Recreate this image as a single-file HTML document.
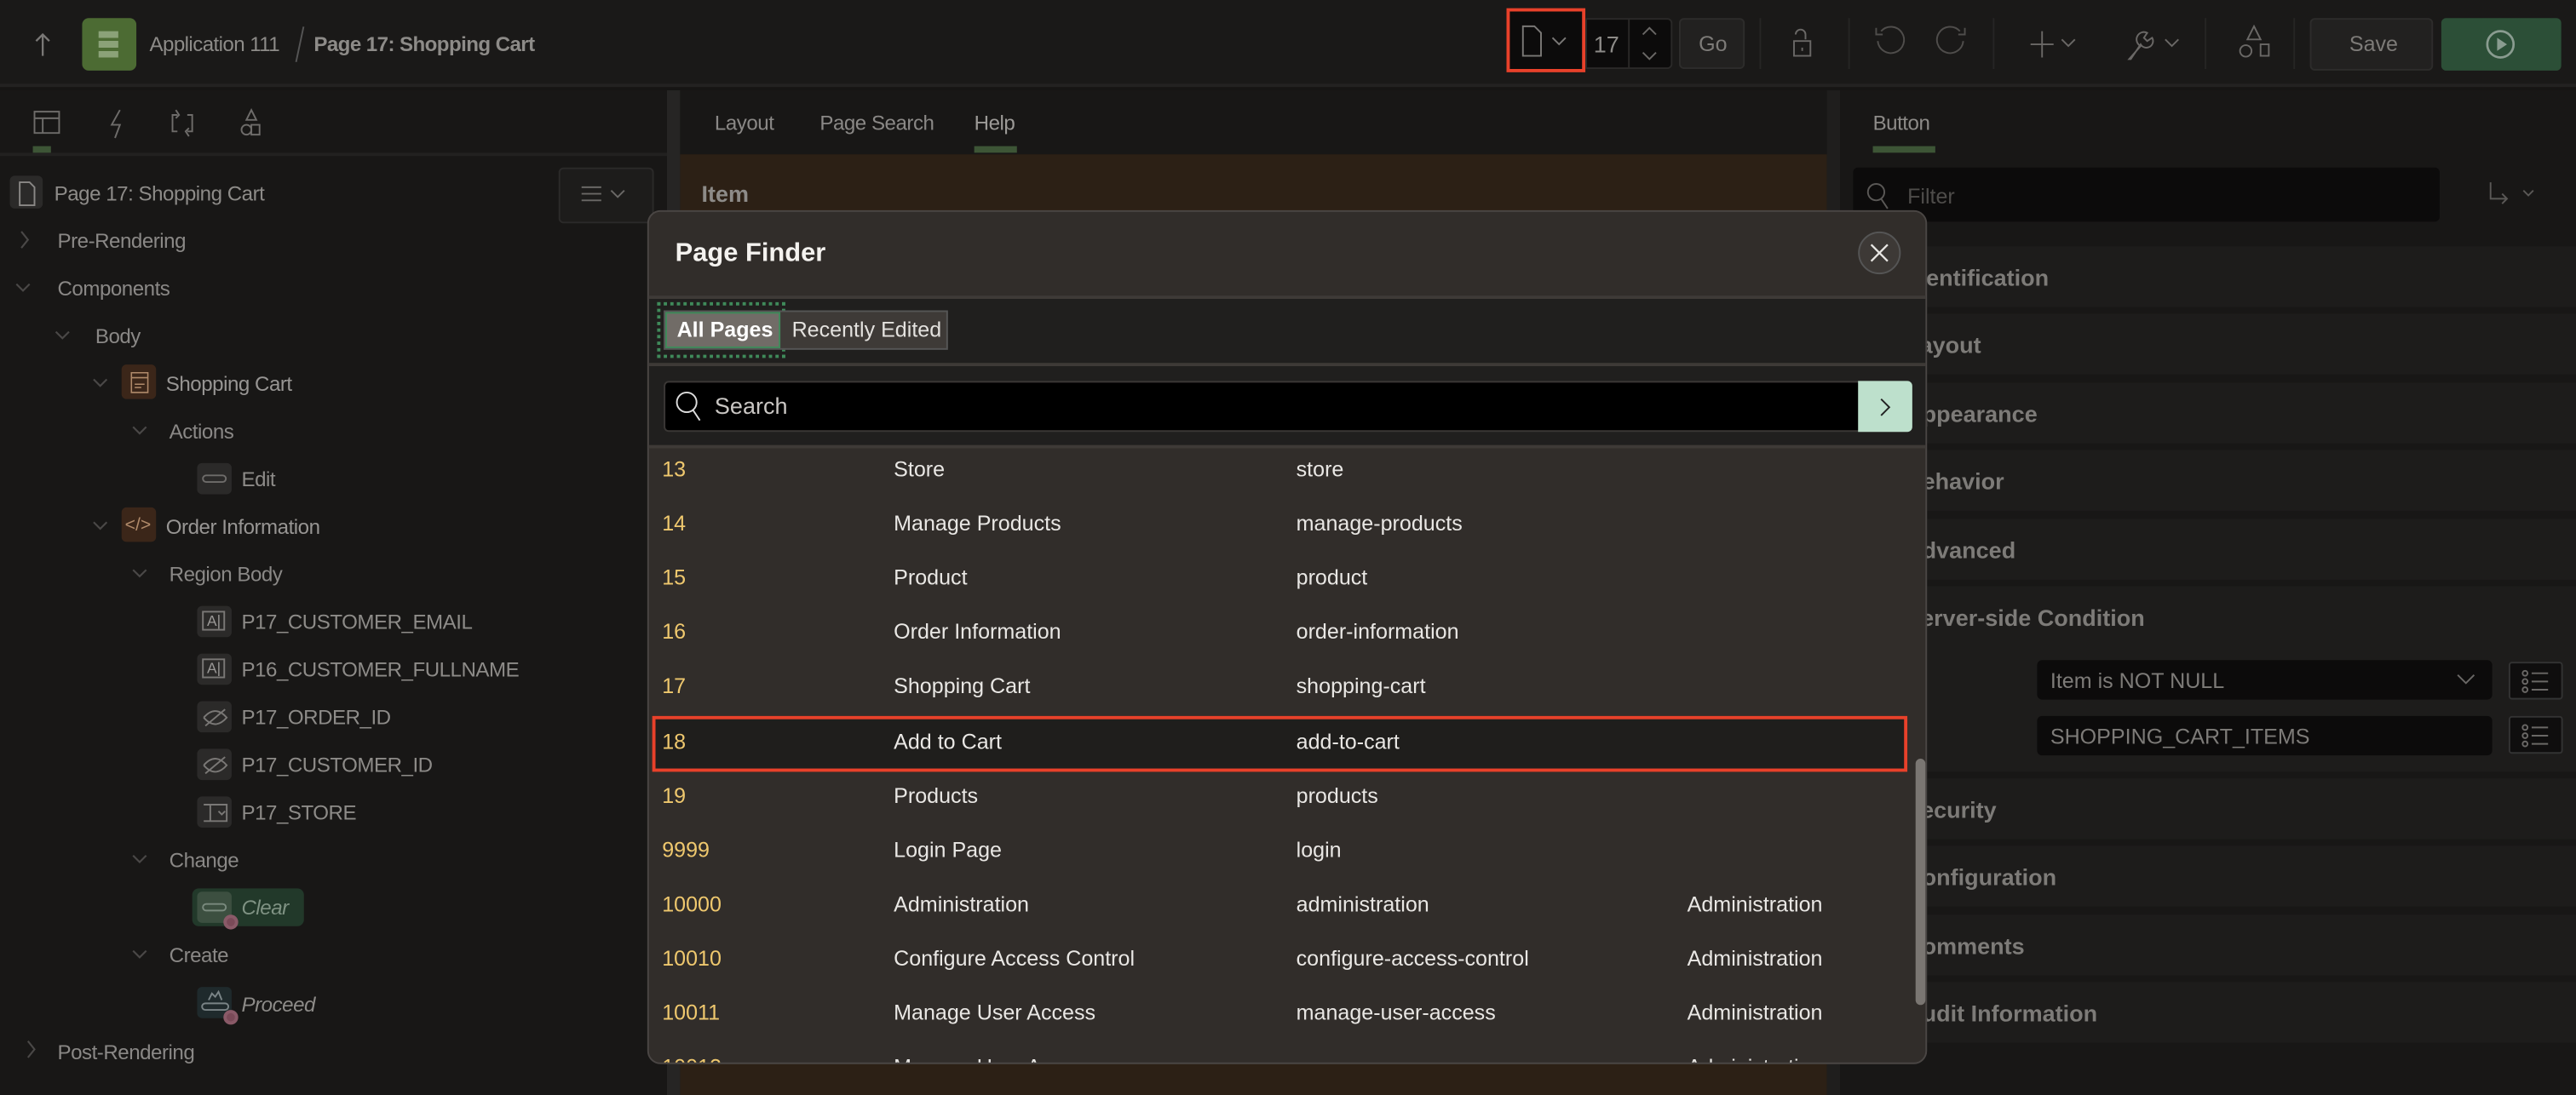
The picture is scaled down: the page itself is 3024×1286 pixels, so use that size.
<!DOCTYPE html>
<html><head><meta charset="utf-8">
<style>
*{box-sizing:border-box;margin:0;padding:0}
html,body{width:3024px;height:1286px;overflow:hidden;background:#161514}
#s{position:absolute;left:0;top:0;width:1568px;height:667px;transform:scale(1.928571);transform-origin:0 0;font-family:"Liberation Sans",sans-serif;color:#8a8886;font-size:13px;background:#161514}
.a{position:absolute}
.t{position:absolute;white-space:nowrap;line-height:16px}
.tr{font-size:12.5px;letter-spacing:-0.25px}
svg{position:absolute;overflow:visible}
.ic{position:absolute;width:21px;height:19px;background:#2b2a29;border-radius:3px}
.sec{position:absolute;left:1120px;width:448px;height:37px;background:#1d1c1b}
.sec span{position:absolute;left:40px;top:11px;font-weight:bold;font-size:14px;color:#7d7b78}
.row{position:absolute;left:396px;width:768px;height:33px;color:#e9e7e4;font-size:13px}
.row span{position:absolute;top:8px;white-space:nowrap}
.row .n{left:7px;color:#efc86e}
.row .c2{left:148px}.row .c3{left:393px}.row .c4{left:631px}
</style></head><body><div id="s">
<div class="a" style="left:0;top:0;width:1568px;height:53px;background:#1a1918;border-bottom:2px solid #232221"></div>
<svg style="left:20px;top:19px" width="12" height="16"><path d="M6 15V2M2 6l4-4 4 4" stroke="#7a7876" stroke-width="1.2" fill="none"/></svg>
<div class="a" style="left:50px;top:11px;width:33px;height:32px;background:#4c6b33;border-radius:4px"></div>
<div class="a" style="left:60px;top:19px;width:12px;height:17px;background:repeating-linear-gradient(#9bb089 0 4px,#4c6b33 4px 6px);opacity:.8"></div>
<div class="t" style="left:91px;top:19px;font-size:12.5px;letter-spacing:-0.3px;color:#8d8b88">Application 111</div>
<div class="a" style="left:182px;top:16px;width:1px;height:22px;background:#555;transform:rotate(12deg)"></div>
<div class="t" style="left:191px;top:19px;font-size:12.5px;letter-spacing:-0.3px;font-weight:bold;color:#8d8b88">Page 17: Shopping Cart</div>
<div class="a" style="left:919px;top:7px;width:44px;height:36px;background:#0c0b0b"></div>
<svg style="left:926px;top:15px" width="30" height="20"><path d="M1 1h7l4 4v14H1z" stroke="#7a7876" fill="none"/><path d="M19 8l4 4 4-4" stroke="#7a7876" fill="none"/></svg>
<div class="a" style="left:917px;top:5px;width:48px;height:39px;border:2px solid #e8412a"></div>
<div class="a" style="left:965px;top:11px;width:53px;height:31px;background:#0c0b0b;border:1px solid #2a2928;border-radius:0 3px 3px 0"></div>
<div class="a" style="left:991px;top:11px;width:1px;height:31px;background:#2a2928"></div>
<div class="t" style="left:970px;top:19px;font-size:14px;color:#8d8b88">17</div>
<svg style="left:999px;top:16px" width="10" height="22"><path d="M1 5l4-4 4 4M1 16l4 4 4-4" stroke="#6a6866" fill="none"/></svg>
<div class="a" style="left:1022px;top:11px;width:40px;height:31px;background:#222120;border:1px solid #2d2c2b;border-radius:3px"></div>
<div class="t" style="left:1034px;top:19px;color:#7d7b78">Go</div>
<div class="a" style="left:1071px;top:11px;width:1px;height:31px;background:#262524"></div>
<svg style="left:1090px;top:16px" width="16" height="22"><path d="M3 5a3 3 0 0 1 6 0v3M2 9h10v9H2z" stroke="#6a6866" fill="none"/><path d="M7 13v2" stroke="#6a6866"/></svg>
<div class="a" style="left:1125px;top:11px;width:1px;height:31px;background:#262524"></div>
<svg style="left:1140px;top:16px" width="70" height="22"><path d="M5 3a8 8 0 1 1 -2 6M2 1v4h4" stroke="#4f4d4b" fill="none"/><path d="M53 3a8 8 0 1 0 2 6M56 1v4h-4" stroke="#4f4d4b" fill="none"/></svg>
<div class="a" style="left:1213px;top:11px;width:1px;height:31px;background:#262524"></div>
<svg style="left:1236px;top:18px" width="30" height="18"><path d="M7 1v16M0 9h14M19 6l4 4 4-4" stroke="#6a6866" fill="none"/></svg>
<svg style="left:1291px;top:16px" width="36" height="22"><path d="M5 20l7-8a4 4 0 0 1 4-8l-2 3 2 2 3-2a4 4 0 0 1-7 4l-6 9z" stroke="#6a6866" fill="none"/><path d="M27 8l4 4 4-4" stroke="#6a6866" fill="none"/></svg>
<div class="a" style="left:1342px;top:11px;width:1px;height:31px;background:#262524"></div>
<svg style="left:1362px;top:15px" width="20" height="22"><path d="M10 1l4 8H6z M14 12h5v7h-5z" stroke="#6a6866" fill="none"/><circle cx="5" cy="16" r="3.5" stroke="#6a6866" fill="none"/></svg>
<div class="a" style="left:1396px;top:11px;width:1px;height:31px;background:#262524"></div>
<div class="a" style="left:1406px;top:11px;width:75px;height:32px;background:#222120;border:1px solid #2d2c2b;border-radius:3px"></div>
<div class="t" style="left:1430px;top:19px;color:#7d7b78">Save</div>
<div class="a" style="left:1486px;top:11px;width:73px;height:32px;background:#2c4f37;border-radius:3px"></div>
<svg style="left:1512px;top:17px" width="22" height="22"><circle cx="10" cy="10" r="8" stroke="#8a9c90" stroke-width="1.4" fill="none"/><path d="M8 6l6 4-6 4z" fill="#8a9c90"/></svg>
<div class="a" style="left:0;top:55px;width:406px;height:612px;background:#181716"></div>
<div class="a" style="left:0;top:93px;width:406px;height:2px;background:#222120"></div>
<svg style="left:20px;top:66px" width="150" height="20"><path d="M1 2h15v13H1zM1 6h15M6 6v9" stroke="#6e6c6a" fill="none"/><path d="M53 1l-5 9h5l-3 8" stroke="#6e6c6a" fill="none"/><path d="M88 4h-3v10h3M94 4h3v10h-3M87 1l2 3-2 2M95 17l-2-3 2-2" stroke="#6e6c6a" fill="none"/><path d="M133 1l3 6h-6z M133 10h5v6h-5z" stroke="#6e6c6a" fill="none"/><circle cx="130" cy="13" r="3" stroke="#6e6c6a" fill="none"/></svg>
<div class="a" style="left:20px;top:89px;width:11px;height:4px;background:#3d5536"></div>
<div class="a" style="left:6px;top:107px;width:20px;height:20px;background:#2b2a29;border-radius:3px"></div>
<svg style="left:11px;top:110px" width="12" height="16"><path d="M1 1h6l3 3v11H1z" stroke="#8a8886" fill="none"/></svg>
<div class="t tr" style="left:33px;top:110px;color:#8d8b88">Page 17: Shopping Cart</div>
<div class="a" style="left:340px;top:102px;width:58px;height:34px;background:#1d1c1b;border:1px solid #2b2a29;border-radius:3px"></div>
<svg style="left:354px;top:113px" width="30" height="12"><path d="M0 1h12M0 5h12M0 9h12M18 3l4 4 4-4" stroke="#6a6866" fill="none"/></svg>
<svg style="left:0;top:0" width="400" height="667"><g stroke="#4a4847" fill="none" stroke-width="1.1">
<path d="M13 141l4 5-4 5"/>
<path d="M10 173l4 4 4-4"/><path d="M34 202l4 4 4-4"/><path d="M57 231l4 4 4-4"/><path d="M81 260l4 4 4-4"/><path d="M57 318l4 4 4-4"/><path d="M81 347l4 4 4-4"/><path d="M81 521l4 4 4-4"/><path d="M81 579l4 4 4-4"/>
<path d="M17 634l4 5-4 5"/></g></svg>
<div class="t tr" style="left:35px;top:139px">Pre-Rendering</div>
<div class="t tr" style="left:35px;top:168px">Components</div>
<div class="t tr" style="left:58px;top:197px">Body</div>
<div class="a" style="left:74px;top:222px;width:21px;height:21px;background:#3b2619;border-radius:3px"></div>
<svg style="left:79px;top:226px" width="12" height="14"><path d="M1 1h10v12H1zM1 4h10M3 8h6M3 10h4" stroke="#b08a6a" fill="none" stroke-width=".8"/></svg>
<div class="t tr" style="left:101px;top:226px;color:#979593">Shopping Cart</div>
<div class="t tr" style="left:103px;top:255px">Actions</div>
<div class="ic" style="left:120px;top:282px"></div><div class="a" style="left:123px;top:289px;width:15px;height:5px;border:1px solid #6e6c6a;border-radius:3px"></div>
<div class="t tr" style="left:147px;top:284px;color:#8d8b88">Edit</div>
<div class="a" style="left:74px;top:309px;width:21px;height:21px;background:#3b2619;border-radius:3px"></div>
<div class="t" style="left:76px;top:312px;font-size:11px;color:#b08a6a">&lt;/&gt;</div>
<div class="t tr" style="left:101px;top:313px;color:#979593">Order Information</div>
<div class="t tr" style="left:103px;top:342px">Region Body</div>
<div class="ic" style="left:120px;top:369px"></div><div class="t" style="left:123px;top:372px;font-size:9px;border:1px solid #7a7876;line-height:10px;padding:0 2px;color:#9a9896">A|</div>
<div class="t tr" style="left:147px;top:371px;color:#8d8b88">P17_CUSTOMER_EMAIL</div>
<div class="ic" style="left:120px;top:398px"></div><div class="t" style="left:123px;top:401px;font-size:9px;border:1px solid #7a7876;line-height:10px;padding:0 2px;color:#9a9896">A|</div>
<div class="t tr" style="left:147px;top:400px;color:#8d8b88">P16_CUSTOMER_FULLNAME</div>
<div class="ic" style="left:120px;top:427px"></div><svg style="left:123px;top:431px" width="16" height="12"><path d="M1 6q7-8 14 0q-7 8-14 0M2 11L14 1" stroke="#7a7876" fill="none"/></svg>
<div class="t tr" style="left:147px;top:429px;color:#8d8b88">P17_ORDER_ID</div>
<div class="ic" style="left:120px;top:456px"></div><svg style="left:123px;top:460px" width="16" height="12"><path d="M1 6q7-8 14 0q-7 8-14 0M2 11L14 1" stroke="#7a7876" fill="none"/></svg>
<div class="t tr" style="left:147px;top:458px;color:#8d8b88">P17_CUSTOMER_ID</div>
<div class="ic" style="left:120px;top:485px"></div><svg style="left:123px;top:489px" width="16" height="12"><path d="M1 1h14v10H1M5 1v10M10 5l2 2 2-2" stroke="#7a7876" fill="none"/></svg>
<div class="t tr" style="left:147px;top:487px;color:#8d8b88">P17_STORE</div>
<div class="t tr" style="left:103px;top:516px">Change</div>
<div class="a" style="left:117px;top:541px;width:68px;height:23px;background:#22392a;border-radius:4px"></div>
<div class="a" style="left:120px;top:543px;width:21px;height:19px;background:#3c4f40;border-radius:3px"></div><div class="a" style="left:123px;top:550px;width:15px;height:5px;border:1px solid #7a8a7e;border-radius:3px"></div>
<div class="a" style="left:136px;top:557px;width:9px;height:9px;border-radius:50%;background:#7a4a58;border:2px solid #8a5a68"></div>
<div class="t tr" style="left:147px;top:545px;font-style:italic;color:#7f9283">Clear</div>
<div class="t tr" style="left:103px;top:574px">Create</div>
<div class="ic" style="left:120px;top:601px;background:#1f2a2c"></div><svg style="left:123px;top:603px" width="16" height="14"><path d="M2 12h12a2 2 0 0 0 0-4H2a2 2 0 0 0 0 4M4 6l2-4 2 2 2-3 2 5" stroke="#7a8486" fill="none"/></svg>
<div class="a" style="left:136px;top:615px;width:9px;height:9px;border-radius:50%;background:#7a4a58;border:2px solid #8a5a68"></div>
<div class="t tr" style="left:147px;top:604px;font-style:italic;color:#8d8b88">Proceed</div>
<div class="t tr" style="left:35px;top:633px">Post-Rendering</div>
<div class="a" style="left:406px;top:55px;width:8px;height:612px;background:#262524"></div>
<div class="a" style="left:414px;top:55px;width:698px;height:39px;background:#181716"></div>
<div class="t tr" style="left:435px;top:67px">Layout</div>
<div class="t tr" style="left:499px;top:67px">Page Search</div>
<div class="t tr" style="left:593px;top:67px;color:#9c9a97">Help</div>
<div class="a" style="left:593px;top:89px;width:26px;height:4px;background:#3d5536"></div>
<div class="a" style="left:414px;top:94px;width:698px;height:573px;background:#2c2015"></div>
<div class="t" style="left:427px;top:110px;font-weight:bold;font-size:14px;color:#8d8b88">Item</div>
<div class="a" style="left:1112px;top:55px;width:8px;height:612px;background:#1f1e1d"></div>
<div class="a" style="left:1120px;top:55px;width:448px;height:612px;background:#181716"></div>
<div class="t tr" style="left:1140px;top:67px;color:#8d8b88">Button</div>
<div class="a" style="left:1140px;top:89px;width:38px;height:4px;background:#3d5536"></div>
<div class="a" style="left:1128px;top:102px;width:357px;height:33px;background:#0c0b0b;border-radius:3px"></div>
<svg style="left:1136px;top:111px" width="16" height="18"><circle cx="6" cy="6" r="5" stroke="#5a5856" fill="none"/><path d="M9 10l4 6" stroke="#5a5856"/></svg>
<div class="t" style="left:1161px;top:112px;color:#4e4c4a">Filter</div>
<svg style="left:1514px;top:110px" width="32" height="18"><path d="M2 1v10h10M9 8l3 3-3 3M22 6l3 3 3-3" stroke="#5a5856" fill="none"/></svg>
<div class="sec" style="top:150px"><span>Identification</span></div>
<div class="sec" style="top:191px"><span>Layout</span></div>
<div class="sec" style="top:233px"><span>Appearance</span></div>
<div class="sec" style="top:274px"><span>Behavior</span></div>
<div class="sec" style="top:316px"><span>Advanced</span></div>
<div class="sec" style="top:357px;height:113px"><span>Server-side Condition</span></div>
<div class="a" style="left:1240px;top:402px;width:277px;height:24px;background:#0c0b0b;border-radius:3px"></div>
<div class="t" style="left:1248px;top:407px;color:#7d7b78">Item is NOT NULL</div>
<svg style="left:1495px;top:410px" width="12" height="8"><path d="M1 1l5 5 5-5" stroke="#6a6866" fill="none"/></svg>
<div class="a" style="left:1240px;top:436px;width:277px;height:24px;background:#0c0b0b;border-radius:3px"></div>
<div class="t" style="left:1248px;top:441px;color:#7d7b78">SHOPPING_CART_ITEMS</div>
<div class="a" style="left:1527px;top:403px;width:33px;height:23px;border:1px solid #333;background:#0f0e0e;border-radius:2px"></div>
<div class="a" style="left:1527px;top:436px;width:33px;height:23px;border:1px solid #333;background:#0f0e0e;border-radius:2px"></div>
<svg style="left:1535px;top:407px" width="18" height="50"><g stroke="#6a6866" fill="none"><circle cx="2" cy="3" r="1.5"/><circle cx="2" cy="8" r="1.5"/><circle cx="2" cy="13" r="1.5"/><path d="M6 3h10M6 8h10M6 13h10"/><circle cx="2" cy="36" r="1.5"/><circle cx="2" cy="41" r="1.5"/><circle cx="2" cy="46" r="1.5"/><path d="M6 36h10M6 41h10M6 46h10"/></g></svg>
<div class="sec" style="top:474px"><span>Security</span></div>
<div class="sec" style="top:515px"><span>Configuration</span></div>
<div class="sec" style="top:557px"><span>Comments</span></div>
<div class="sec" style="top:598px"><span>Audit Information</span></div>
<div class="a" style="left:394px;top:128px;width:779px;height:520px;background:#312d2a;border:1px solid #4a4644;border-radius:8px;overflow:hidden">
  <div class="a" style="left:0;top:51px;width:779px;height:43px;background:#201f1e;border-top:2px solid #3e3a37;border-bottom:2px solid #3e3a37"></div>
  <div class="a" style="left:0;top:94px;width:779px;height:50px;background:#201f1e;border-bottom:2px solid #3e3a37"></div>
</div>
<div class="t" style="left:411px;top:145px;font-size:16px;font-weight:bold;color:#f4f2ef;line-height:19px">Page Finder</div>
<div class="a" style="left:1131px;top:141px;width:26px;height:26px;border-radius:50%;background:#3d3936;border:1px solid #555"></div>
<svg style="left:1138px;top:148px" width="12" height="12"><path d="M1 1l10 10M11 1L1 11" stroke="#e8e6e3" stroke-width="1.2"/></svg>
<div class="a" style="left:400px;top:184px;width:78px;height:34px;border:2px dotted #3f8a5a"></div>
<div class="a" style="left:404px;top:189px;width:173px;height:24px;background:#3e3a37;border:1px solid #555"></div>
<div class="a" style="left:405px;top:190px;width:70px;height:22px;background:#716c67;border:1px solid #3f8a5a"></div>
<div class="t" style="left:412px;top:193px;font-weight:bold;color:#fff">All Pages</div>
<div class="t" style="left:482px;top:193px;color:#e4e2df">Recently Edited</div>
<div class="a" style="left:404px;top:232px;width:760px;height:31px;background:#000;border:1px solid #3a3735;border-radius:3px"></div>
<div class="a" style="left:1131px;top:232px;width:33px;height:31px;background:#bde0cc;border-radius:0 3px 3px 0"></div>
<svg style="left:1144px;top:242px" width="8" height="12"><path d="M1 1l5 5-5 5" stroke="#222" fill="none"/></svg>
<svg style="left:411px;top:238px" width="18" height="20"><circle cx="7" cy="7" r="6" stroke="#ddd" fill="none"/><path d="M11 12l4 6" stroke="#ddd"/></svg>
<div class="t" style="left:435px;top:239px;font-size:14px;color:#c9c6c3">Search</div>
<div class="row" style="top:270px"><span class="n">13</span><span class="c2">Store</span><span class="c3">store</span></div>
<div class="row" style="top:303px"><span class="n">14</span><span class="c2">Manage Products</span><span class="c3">manage-products</span></div>
<div class="row" style="top:336px"><span class="n">15</span><span class="c2">Product</span><span class="c3">product</span></div>
<div class="row" style="top:369px"><span class="n">16</span><span class="c2">Order Information</span><span class="c3">order-information</span></div>
<div class="row" style="top:402px"><span class="n">17</span><span class="c2">Shopping Cart</span><span class="c3">shopping-cart</span></div>
<div class="a" style="left:397px;top:436px;width:764px;height:34px;background:#1f1e1c;border:2px solid #e8412a"></div>
<div class="row" style="top:436px"><span class="n">18</span><span class="c2">Add to Cart</span><span class="c3">add-to-cart</span></div>
<div class="row" style="top:469px"><span class="n">19</span><span class="c2">Products</span><span class="c3">products</span></div>
<div class="row" style="top:502px"><span class="n">9999</span><span class="c2">Login Page</span><span class="c3">login</span></div>
<div class="row" style="top:535px"><span class="n">10000</span><span class="c2">Administration</span><span class="c3">administration</span><span class="c4">Administration</span></div>
<div class="row" style="top:568px"><span class="n">10010</span><span class="c2">Configure Access Control</span><span class="c3">configure-access-control</span><span class="c4">Administration</span></div>
<div class="row" style="top:601px"><span class="n">10011</span><span class="c2">Manage User Access</span><span class="c3">manage-user-access</span><span class="c4">Administration</span></div>
<div class="a" style="left:396px;top:641px;width:768px;height:6px;overflow:hidden"><div class="row" style="left:0;top:-7px"><span class="n">10012</span><span class="c2">Manage User Access</span><span class="c3">manage-user-access</span><span class="c4">Administration</span></div></div>
<div class="a" style="left:1166px;top:462px;width:6px;height:150px;background:#7a7672;border-radius:3px"></div>
</div></body></html>
